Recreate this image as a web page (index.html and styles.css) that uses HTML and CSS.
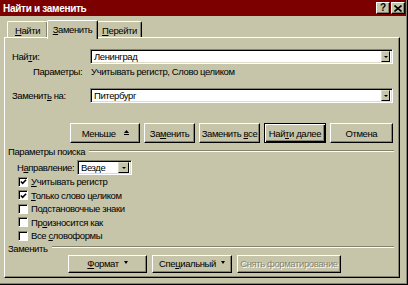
FILE: index.html
```
<!DOCTYPE html>
<html lang="ru">
<head>
<meta charset="utf-8">
<title>Найти и заменить</title>
<link rel="stylesheet" href="styles.css">
</head>
<body>
<div class="window">
  <div class="titlebar">
    <span class="title">Найти и заменить</span>
    <div class="tbtns">
      <span class="tbtn">?</span>
      <span class="tbtn">
        <svg width="8" height="7" viewBox="0 0 8 7"><path d="M0.5 0.5 L7.5 6.5 M7.5 0.5 L0.5 6.5" stroke="#000" stroke-width="1.6"/></svg>
      </span>
    </div>
  </div>
  <div class="tabs">
    <div class="tab t1"><span><u>Н</u>айти</span></div>
    <div class="tab sel t2"><span><u>З</u>аменить</span></div>
    <div class="tab t3"><span><u>П</u>ерейти</span></div>
  </div>
  <div class="panel">
    <div class="frow first">
      <span class="lbl">Най<u>т</u>и:</span>
      <div class="combo"><span class="val">Ленинград</span><span class="dd"><i class="arr"></i></span></div>
    </div>
    <div class="params">
      <span class="plbl">Параметры:</span>
      <span>Учитывать регистр, Слово целиком</span>
    </div>
    <div class="frow second">
      <span class="lbl">Заменит<u>ь</u> на:</span>
      <div class="combo"><span class="val">Питербург</span><span class="dd"><i class="arr"></i></span></div>
    </div>
    <div class="btnrow">
      <span class="btn w71"><span>Меньше</span>
        <svg class="lessico" width="5" height="6" viewBox="0 0 5 6"><path d="M2.5 0 L5 3 L0 3 Z" fill="#000"/><rect x="0" y="4" width="5" height="1" fill="#000"/></svg>
      </span>
      <span class="btn w51"><span>За<u>м</u>енить</span></span>
      <span class="btn w62"><span>Заменить <u>в</u>се</span></span>
      <span class="btn w62 def"><span>Най<u>т</u>и далее</span></span>
      <span class="btn w64"><span>Отмена</span></span>
    </div>
    <div class="ghead g1"><span>Параметры поиска</span><i class="etch"></i></div>
    <div class="dirrow">
      <span class="dlbl">Н<u>а</u>правление:</span>
      <div class="combo sm"><span class="val">Везде</span><span class="dd big"><i class="arr"></i></span></div>
    </div>
    <div class="checks">
      <div class="chk"><span class="box on"><svg width="8" height="8" viewBox="0 0 8 8"><path d="M1 3.5 L3 5.5 L7 1.5" stroke="#000" stroke-width="1.8" fill="none"/></svg></span><span><u>У</u>читывать регистр</span></div>
      <div class="chk"><span class="box on"><svg width="8" height="8" viewBox="0 0 8 8"><path d="M1 3.5 L3 5.5 L7 1.5" stroke="#000" stroke-width="1.8" fill="none"/></svg></span><span><u>Т</u>олько слово целиком</span></div>
      <div class="chk"><span class="box"></span><span>Подстановочные знаки</span></div>
      <div class="chk"><span class="box"></span><span>Пр<u>о</u>износится как</span></div>
      <div class="chk"><span class="box"></span><span>Все <u>с</u>ловоформы</span></div>
    </div>
    <div class="ghead g2"><span>Заменить</span><i class="etch"></i></div>
    <div class="btnrow2">
      <span class="btn w79"><span><u>Ф</u>ормат</span><i class="darr"></i></span>
      <span class="btn w80"><span>Спе<u>ц</u>иальный</span><i class="darr"></i></span>
      <span class="btn w104 dis"><span>Снять форматирование</span></span>
    </div>
  </div>
</div>
</body>
</html>
```
FILE: styles.css
```
* { box-sizing: border-box; }
html, body { margin: 0; padding: 0; }
body {
  width: 408px;
  height: 285px;
  overflow: hidden;
  background: #c6c5a9;
  font-family: "Liberation Sans", Arial, sans-serif;
  font-size: 9.5px;
  letter-spacing: -0.4px;
  color: #000;
}
u { text-decoration: underline; text-underline-offset: 1px; }

.window {
  width: 408px;
  height: 285px;
  background: #c6c5a9;
  border-right: 1px solid #000;
  border-bottom: 1px solid #000;
  box-shadow: inset -1px -1px 0 #858470;
  display: flex;
  flex-direction: column;
}

.titlebar {
  height: 16px;
  margin-right: 1px;
  background: #7c0000;
  display: flex;
  align-items: center;
  justify-content: space-between;
  padding-left: 3px;
  padding-right: 1px;
}
.title {
  color: #fff;
  font-weight: bold;
  font-size: 10px;
  letter-spacing: -0.3px;
}
.tbtns { display: flex; gap: 1px; }
.tbtn {
  width: 14px;
  height: 12px;
  background: #c6c5a9;
  border: 1px solid;
  border-color: #fff #000 #000 #fff;
  box-shadow: inset -1px -1px 0 #858470;
  display: flex;
  align-items: center;
  justify-content: center;
  font-weight: bold;
  font-size: 10px;
  letter-spacing: 0;
  line-height: 1;
}

.tabs {
  height: 21px;
  display: flex;
  align-items: flex-end;
  padding-left: 7px;
  position: relative;
  z-index: 2;
}
.tab {
  height: 16px;
  border-top: 1px solid #fff;
  border-left: 1px solid #fff;
  border-right: 1px solid #000;
  box-shadow: inset -1px 0 0 #858470;
  border-radius: 2px 2px 0 0;
  display: flex;
  align-items: center;
  justify-content: center;
  padding-top: 1px;
}
.t1 { width: 41px; margin-right: -1px; }
.t2 { width: 51px; }
.t3 { width: 45px; margin-left: -1px; }
.tab.sel {
  height: 19px;
  margin-bottom: -2px;
  background: #c6c5a9;
  position: relative;
  z-index: 3;
  padding-top: 0;
  padding-bottom: 2px;
}

.panel {
  margin-left: 4px;
  width: 396px;
  height: 241px;
  border-top: 1px solid #fff;
  border-left: 1px solid #fff;
  border-right: 1px solid #000;
  border-bottom: 1px solid #000;
  box-shadow: inset -1px -1px 0 #858470;
  padding: 0 6px 0 3px;
  display: flex;
  flex-direction: column;
}

.frow {
  display: flex;
  align-items: center;
  height: 15px;
  padding-left: 4px;
}
.frow.first { margin-top: 11px; }
.frow.second { margin-top: 10px; }
.lbl { width: 78px; }
.combo {
  flex: 1;
  height: 15px;
  background: #fff;
  border: 1px solid;
  border-color: #858470 #fff #fff #858470;
  box-shadow: inset 1px 1px 0 #000, inset -1px -1px 0 #dedcc8;
  display: flex;
  align-items: center;
  padding: 2px 2px 2px 3px;
}
.combo .val { flex: 1; line-height: 11px; }
.dd {
  width: 9px;
  height: 11px;
  background: #c6c5a9;
  border: 1px solid;
  border-color: #dedcc8 #000 #000 #dedcc8;
  display: flex;
  align-items: center;
  justify-content: center;
}
.dd.big { width: 11px; }
.arr {
  width: 0;
  height: 0;
  border-left: 2px solid transparent;
  border-right: 2px solid transparent;
  border-top: 2px solid #000;
}

.params {
  display: flex;
  height: 13px;
  line-height: 13px;
  margin-top: 1px;
}
.plbl { margin-left: 25px; width: 58px; }

.btnrow {
  display: flex;
  gap: 4px;
  margin-top: 20px;
  margin-left: 62px;
  height: 20px;
}
.btn {
  height: 100%;
  border: 1px solid;
  border-color: #fff #000 #000 #fff;
  box-shadow: inset -1px -1px 0 #858470;
  display: flex;
  align-items: center;
  justify-content: center;
  white-space: nowrap;
}
.btn.def {
  border: 1px solid #000;
  box-shadow: inset 1px 1px 0 #fff, inset -1px -1px 0 #000, inset -2px -2px 0 #858470;
}
.w71 { width: 71px; }
.w51 { width: 51px; }
.w62 { width: 62px; }
.w64 { width: 64px; }
.w79 { width: 79px; }
.w80 { width: 80px; }
.w104 { width: 104px; }
.lessico { margin-left: 8px; }
.darr {
  display: inline-block;
  margin-left: 5px;
  width: 0;
  height: 0;
  border-left: 2.5px solid transparent;
  border-right: 2.5px solid transparent;
  border-top: 3px solid #000;
  position: relative;
  top: -1px;
}
.btn.dis {
  color: #858470;
  text-shadow: 1px 1px 0 #fff;
}

.ghead {
  display: flex;
  align-items: center;
  height: 13px;
  line-height: 13px;
}
.ghead.g1 { margin-top: 2px; }
.ghead.g2 { height: 11px; line-height: 11px; }
.etch {
  flex: 1;
  height: 2px;
  margin-left: 4px;
  margin-right: -1px;
  border-top: 1px solid #858470;
  border-bottom: 1px solid #fff;
  position: relative;
  top: -1px;
}

.dirrow {
  display: flex;
  align-items: center;
  height: 15px;
  margin-top: 2px;
  padding-left: 9px;
}
.dlbl { width: 60px; }
.combo.sm { flex: none; width: 55px; }

.checks { display: flex; flex-direction: column; }
.chk {
  height: 13.5px;
  display: flex;
  align-items: center;
  padding-left: 10px;
}
.box {
  width: 10px;
  height: 10px;
  margin-right: 3px;
  background: #fff;
  border: 1px solid;
  border-color: #858470 #fff #fff #858470;
  box-shadow: inset 1px 1px 0 #000;
  display: flex;
  align-items: center;
  justify-content: center;
}
.box svg { margin-left: 1px; margin-top: 1px; }

.btnrow2 {
  display: flex;
  gap: 5px;
  margin-top: 1px;
  margin-left: 60px;
  height: 18px;
}
```
